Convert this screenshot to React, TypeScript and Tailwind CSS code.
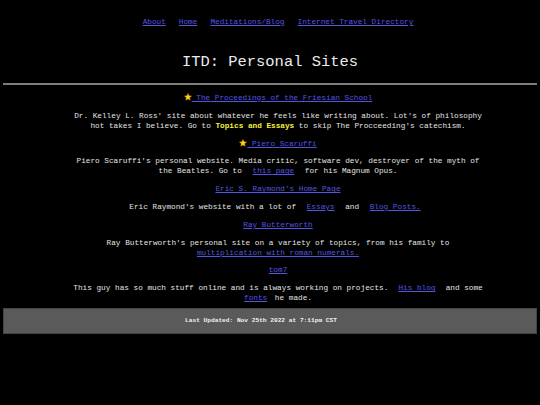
import React from 'react';

const mono = { fontFamily: '"Liberation Mono", "DejaVu Sans Mono", monospace' };

const Star = () => (
  <svg width="8" height="8" viewBox="0 0 24 24" className="inline-block align-[-1px]">
    <path
      d="M12 1.5l3.2 6.9 7.3.8-5.5 5 1.6 7.3L12 17.8l-6.6 3.7 1.6-7.3-5.5-5 7.3-.8z"
      fill="#ffd21f"
      stroke="#c98a00"
      strokeWidth="1.5"
      strokeLinejoin="round"
    />
  </svg>
);

const A = ({ children, className = '' }: { children: React.ReactNode; className?: string }) => (
  <a href="#" className={`text-[#5454e2] underline ${className}`}>
    {children}
  </a>
);

export default function App() {
  return (
    <div className="min-h-[405px] bg-black text-[#e4e4e4] text-[7.72px] leading-[10px]" style={mono}>
      <div className="pl-[16px] pt-[17px]">
        <nav className="flex justify-center gap-[13px]">
          <A>About</A>
          <A>Home</A>
          <A>Meditations/Blog</A>
          <A>Internet Travel Directory</A>
        </nav>
      </div>

      <h1 className="mt-[26px] text-center text-[15.44px] leading-[18px] text-[#ececec]">ITD: Personal Sites</h1>

      <hr className="mx-[3px] mt-[12px] border-0 h-[2px] bg-[#7c7c7c]" />

      <div className="pl-[16px]">
        <div className="mx-auto w-[411.6px] text-center flex flex-col gap-[7.8px] pt-[8px]">
          <p>
            <Star />
            <A> The Proceedings of the Friesian School</A>
          </p>
          <p>
            Dr. Kelley L. Ross' site about whatever he feels like writing about. Lot's of philosophy hot takes I
            believe. Go to <b className="text-[#f4f43c]">Topics and Essays</b> to skip The Procceeding's catechism.
          </p>

          <p>
            <Star />
            <A> Piero Scaruffi</A>
          </p>
          <p>
            Piero Scaruffi's personal website. Media critic, software dev, destroyer of the myth of the Beatles. Go
            to <A className="mx-[6px]">this page</A> for his Magnum Opus.
          </p>

          <p>
            <A>Eric S. Raymond's Home Page</A>
          </p>
          <p>
            Eric Raymond's website with a lot of <A className="mx-[6px]">Essays</A> and{' '}
            <A className="mx-[6px]">Blog Posts.</A>
          </p>

          <p>
            <A>Ray Butterworth</A>
          </p>
          <p>
            Ray Butterworth's personal site on a variety of topics, from his family to{' '}
            <A>multiplication with roman numerals.</A>
          </p>

          <p>
            <A>tom7</A>
          </p>
          <p>
            This guy has so much stuff online and is always working on projects. <A className="mx-[5.5px]">His blog</A>{' '}
            and some <A className="mr-[3px]">fonts</A> he made.
          </p>
        </div>
      </div>

      <footer className="mx-[3px] mt-[5px] h-[26px] bg-[#5a5a5a] border border-[#454545] flex items-center justify-center pr-[18px]">
        <span className="font-bold text-[6.18px] text-[#f2f2f2]">Last Updated: Nov 25th 2022 at 7:11pm CST</span>
      </footer>
    </div>
  );
}
